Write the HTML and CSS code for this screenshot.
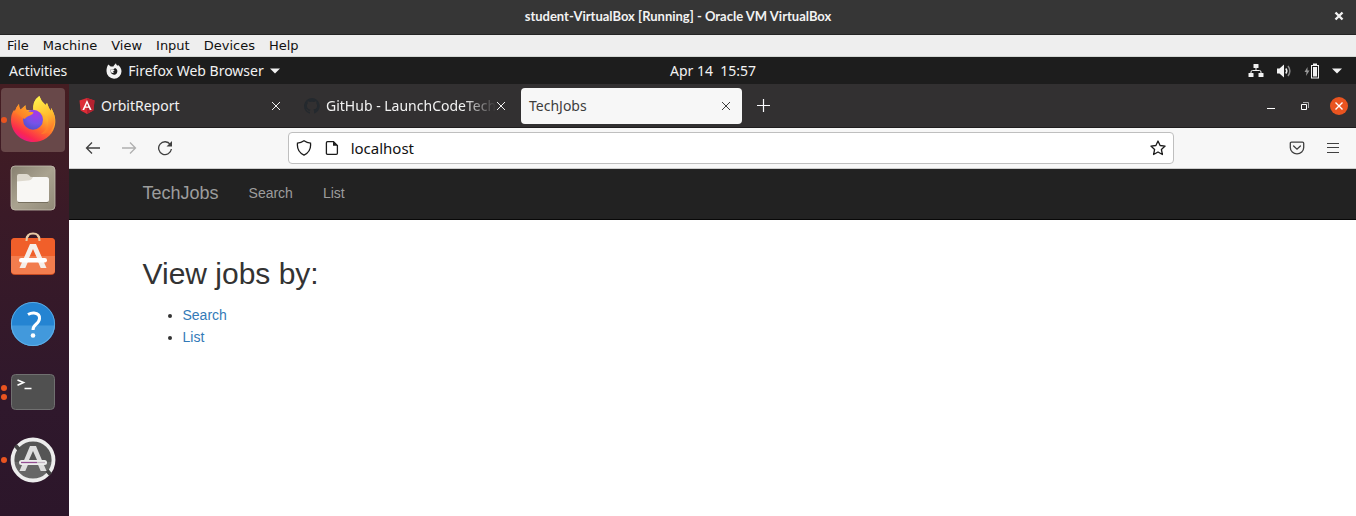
FILE: index.html
```html
<!DOCTYPE html>
<html lang="en">
<head>
<meta charset="utf-8">
<meta name="viewport" content="width=device-width, initial-scale=1">
<title>TechJobs</title>
<link rel="stylesheet" href="styles.css">
</head>
<body>
<header class="titlebar">
  <span class="titlebar-text">student-VirtualBox [Running] - Oracle VM VirtualBox</span>
  <button class="titlebar-close" aria-label="Close machine window">
    <svg width="10" height="10" viewBox="0 0 10 10"><path d="M1.500 1.500l7 7M8.500 1.500l-7 7" stroke="#f2f2f2" stroke-width="2.400"/></svg>
  </button>
</header>

<nav class="menubar" aria-label="Machine menu">
  <button>File</button><button>Machine</button><button>View</button><button>Input</button><button>Devices</button><button>Help</button>
</nav>

<div class="topbar">
  <div class="topbar-left">
    <button class="activities">Activities</button>
    <button class="app-menu">
      <svg width="16" height="16" viewBox="0 0 16 16"><path fill="#f2f2f2" d="M2.300 1.600 4.700 3.500 7.400 3.600C8 2 9 1 10 .2c.1 1.300.7 2 1.500 2.600l.6-.9c1.900 1.600 3.400 3.800 3.400 6.300A7.500 7.500 0 0 1 .5 8.300C.4 6 1 3.600 2.300 1.600z"/><path fill="#1d1d1d" d="M4.300 6.500 7.300 6.700 8.600 5.300C9.600 4.800 10.200 5.600 10.700 6.300c.9 1.200.9 2.900 0 4.100-1.300 1.700-3.900 1.700-5.300.2C4.800 10 4.600 9.400 4.700 8.600z"/><path fill="#f2f2f2" d="M4.300 6.300 7.600 6.900 8.600 7.400Q8 8.400 6.800 8.600 7.200 9.600 8.400 9.500 6.600 10.500 5 9.300z"/></svg>
      <span>Firefox Web Browser</span>
      <svg width="10" height="6" viewBox="0 0 10 6"><path d="M0 .5h10L5 5.500z" fill="#f2f2f2"/></svg>
    </button>
  </div>
  <button class="clock">Apr 14&nbsp; 15:57</button>
  <button class="tray" aria-label="System menu">
    <svg width="16" height="16" viewBox="0 0 16 16"><g fill="#f2f2f2"><rect x="5.500" y="1" width="5" height="4" rx=".6"/><rect x=".5" y="10" width="5" height="4" rx=".6"/><rect x="10.500" y="10" width="5" height="4" rx=".6"/></g><path d="M8 5v3M3 10.500V9q0-1.500 1.500-1.500h7Q13 7.500 13 9v1.500" fill="none" stroke="#f2f2f2"/></svg>
    <svg width="16" height="16" viewBox="0 0 16 16"><path d="M1 5.500h2.500L8 1.500v13l-4.500-4H1z" fill="#f2f2f2"/><path d="M9.800 5.500q2 2.500 0 5" fill="none" stroke="#f2f2f2" stroke-width="1.500"/><path d="M12 3q3.700 5 0 10" fill="none" stroke="#8a8a8a" stroke-width="1.500"/></svg>
    <svg width="16" height="16" viewBox="0 0 16 16"><path d="M3.500 4 .5 9h2L2 13l3.500-5.500h-2z" fill="#999"/><path d="M9 .5h4V2h2v13.500H7V2h2z" fill="#f2f2f2"/><path d="M8 3h6v11.500H8z" fill="#1d1d1d"/><path d="M9 4h4v9.500H9z" fill="#f2f2f2"/></svg>
    <svg width="10" height="6" viewBox="0 0 10 6"><path d="M0 .5h10L5 5.500z" fill="#f2f2f2"/></svg>
  </button>
</div>

<div class="desktop">
  <nav class="dock" aria-label="Dock">
    <button class="dock-item is-active" aria-label="Firefox">
      <span class="dots"><i></i></span>
      <svg viewBox="0 0 64 64">
        <defs>
          <linearGradient id="ff-body" x1=".8" y1=".1" x2=".3" y2="1"><stop offset="0" stop-color="#ffe63c"/><stop offset=".35" stop-color="#ffb02c"/><stop offset=".6" stop-color="#ff6a2c"/><stop offset=".85" stop-color="#fb2850"/><stop offset="1" stop-color="#e8168a"/></linearGradient>
          <linearGradient id="ff-flame" x1=".3" y1="0" x2=".6" y2="1"><stop offset="0" stop-color="#fff34c"/><stop offset=".55" stop-color="#ffbd2f"/><stop offset="1" stop-color="#ff6f2b"/></linearGradient>
          <radialGradient id="ff-globe" cx=".65" cy=".2" r=".9"><stop offset="0" stop-color="#a838e8"/><stop offset=".55" stop-color="#7553e8"/><stop offset="1" stop-color="#4c4fc8"/></radialGradient>
          <linearGradient id="ff-head" x1="1" y1="0" x2="0" y2="1"><stop offset="0" stop-color="#ffb628"/><stop offset="1" stop-color="#ff6c27"/></linearGradient>
        </defs>
        <path fill="url(#ff-body)" d="M18 16Q17.500 19 19.500 22l5-5Q24 20 25 22L34 22Q30 14 38.300 8q1.500 5 6.200 9l1.500-2q1.500 5 4 8v-3c4 6 5.500 13 3.500 19C51 48 42 54 32.500 54 20 54 10 44 10 32q0-6 3-10l1 1q1-4 4-7z"/>
        <path fill="url(#ff-flame)" d="M32 23Q31 13 38.300 8q1.500 5 6.200 9l1.500-2q1.500 5 4 8v-3c4 6 5 13 2.500 18Q49 46 40 46q8-5 7-15-5-8-15-8z"/>
        <circle cx="32" cy="31.800" r="10" fill="url(#ff-globe)"/>
        <path fill="url(#ff-head)" d="M14 23.500Q15 19.500 18 16q0 3 1.500 5.500l5-4q-.2 3 1.500 5 2 1.500 6.500 1.700 0 1.800-3.500 3.300-4.500 1.500-5 3.500l-2.500-1z"/>
      </svg>
    </button>
    <button class="dock-item" aria-label="Files">
      <svg viewBox="0 0 64 64"><defs><linearGradient id="files" x2="1" y2="1"><stop offset="0" stop-color="#878070"/><stop offset=".5" stop-color="#aaa390"/><stop offset="1" stop-color="#918a78"/></linearGradient></defs><rect x="10" y="10" width="44" height="44" rx="4" fill="url(#files)" stroke="#c4beb0" stroke-width=".8"/><rect x="16" y="21" width="32" height="25" rx="2.500" fill="#f8f7f4"/><path d="M16 25.500V20q0-2 2-2h7.500q2 0 2.800 1.500 1 2 3.700 1.500-1.500 3.500-5 3.500z" fill="#ded9ce"/><path d="M17 46.500h30" stroke="#77705f"/></svg>
    </button>
    <button class="dock-item" aria-label="Ubuntu Software">
      <svg viewBox="0 0 64 64"><path d="M25.500 16q0-6.500 6.500-6.500t6.500 6.500" fill="none" stroke="#e9cba6" stroke-width="2"/><rect x="10" y="14" width="44" height="37" rx="4" fill="#c64a22"/><rect x="10" y="14" width="44" height="36" rx="4" fill="#f05f2a"/><path d="M10 32h44v14q0 4-4 4H14q-4 0-4-4z" fill="#f27d4e"/><path d="M25.500 17q0-4 2-5.500M38.500 17q0-4-2-5.500" fill="none" stroke="#e9cba6" stroke-width="2"/><path fill-rule="evenodd" fill="#f5eee9" d="M29 20h6l10.500 24h-5.800l-3-7h-9.400l-3 7h-5.800zM32 25l-4 9h8z"/><rect x="18" y="34" width="28" height="4.500" rx="2.200" fill="#fff"/></svg>
    </button>
    <button class="dock-item" aria-label="Help">
      <svg viewBox="0 0 64 64"><circle cx="32" cy="32" r="22" fill="#2484d2"/><path d="M10 33.500h44a22 20.500 0 0 1-44 0z" fill="#4299dc"/><circle cx="32" cy="32" r="21.600" fill="none" stroke="#69b5e8" stroke-width=".8"/><path d="M27 22.500q3-1.800 6-1.600 6 .6 5.500 5.800-.2 3-3.700 5.800-2.800 2.200-2.800 5.500" fill="none" stroke="#fff" stroke-width="3"/><circle cx="32" cy="43.500" r="2.300" fill="#fff"/></svg>
    </button>
    <button class="dock-item" aria-label="Terminal">
      <span class="dots"><i></i><i></i></span>
      <svg viewBox="0 0 64 64"><rect x="10.500" y="14.500" width="43" height="35" rx="4" fill="#505050" stroke="#707070"/><path d="M16.500 20l6 2.500-6 2.700M23.500 28.500h7" fill="none" stroke="#fff" stroke-width="1.600"/></svg>
    </button>
    <button class="dock-item" aria-label="Software Updater">
      <span class="dots"><i></i></span>
      <svg viewBox="0 0 64 64"><circle cx="32" cy="32" r="20.500" fill="#555"/><path d="M12 34h40a20 19 0 0 1-40 0z" fill="#666"/><circle cx="32" cy="32" r="20.500" fill="none" stroke="#ededed" stroke-width="3.800"/><path d="M14.500 17.500l3.500 4M49.500 46.500l-3.500-4" stroke="#454545" stroke-width="4"/><path fill-rule="evenodd" fill="#dedede" d="M29 18h6l10.500 25h-5.800l-3-7h-9.400l-3 7h-5.800zM32 23l-4 9h8z"/><rect x="18" y="32" width="28" height="5" rx="2.500" fill="#ededed"/><path d="M20 34.500h16" stroke="#924d91" stroke-width="1.300"/><path d="M36 34.500h8" stroke="#c4b8c4" stroke-width="1.300"/></svg>
    </button>
  </nav>

  <section class="browser">
    <div class="tabstrip">
      <div class="tab">
        <svg class="favicon" viewBox="0 0 16 16"><path fill="#dd2c37" d="M8 0l7.500 2.600-1.100 10L8 16l-6.400-3.400L.5 2.600z"/><path fill="#b52230" d="M8 0l7.500 2.600-1.100 10L8 16z"/><path fill="#fff" fill-rule="evenodd" d="M8 2l4.600 10h-1.800l-.9-2.200H6.100L5.200 12H3.400zM8 5.300L6.700 8.400h2.600z"/></svg>
        <span class="tab-label">OrbitReport</span>
        <button class="tab-close" aria-label="Close OrbitReport"><svg viewBox="0 0 10 10"><path d="M1 1l8 8M9 1l-8 8" stroke="currentColor"/></svg></button>
      </div>
      <div class="tab">
        <svg class="favicon" viewBox="0 0 16 16"><path fill="#24292e" d="M8 0a8 8 0 0 0-2.500 15.600c.4.100.5-.2.500-.4v-1.500c-2.200.5-2.700-.9-2.700-.9-.4-.9-.9-1.200-.9-1.200-.7-.5.100-.5.100-.5.800.1 1.200.8 1.200.8.700 1.300 1.900.9 2.300.7.100-.5.300-.9.500-1.100-1.800-.2-3.600-.9-3.600-4 0-.8.300-1.600.8-2.100 0-.2-.3-1 .1-2.100 0 0 .7-.2 2.200.8a7.700 7.700 0 0 1 4 0c1.500-1 2.200-.8 2.200-.8.400 1.100.1 1.900.1 2.100.5.500.8 1.300.8 2.100 0 3.100-1.900 3.700-3.700 3.900.3.300.6.800.6 1.500v2.200c0 .2.100.5.500.4A8 8 0 0 0 8 0z"/></svg>
        <span class="tab-label is-faded">GitHub - LaunchCodeTech</span>
        <button class="tab-close" aria-label="Close GitHub"><svg viewBox="0 0 10 10"><path d="M1 1l8 8M9 1l-8 8" stroke="currentColor"/></svg></button>
      </div>
      <div class="tab is-selected">
        <span class="tab-label">TechJobs</span>
        <button class="tab-close" aria-label="Close TechJobs"><svg viewBox="0 0 10 10"><path d="M1 1l8 8M9 1l-8 8" stroke="currentColor"/></svg></button>
      </div>
      <button class="new-tab" aria-label="New tab"><svg width="13" height="13" viewBox="0 0 13 13"><path d="M6.500 0v13M0 6.500h13" stroke="#fbfbfe" stroke-width="1.200"/></svg></button>
      <div class="window-controls">
        <button aria-label="Minimize"><svg width="8" height="8" viewBox="0 0 8 8"><path d="M0 6.500h8" stroke="#fff"/></svg></button>
        <button aria-label="Restore"><svg width="8" height="8" viewBox="0 0 8 8"><path d="M2 .5h5.500V6" fill="none" stroke="#aaa"/><path d="M.5 2.500h5v5h-5z" fill="none" stroke="#fff"/></svg></button>
        <button class="window-close" aria-label="Close"><svg width="8" height="8" viewBox="0 0 8 8"><path d="M.5.5l7 7M7.500.5l-7 7" stroke="#fff" stroke-width="1.400"/></svg></button>
      </div>
    </div>

    <div class="toolbar">
      <button class="tool" aria-label="Back"><svg viewBox="0 0 16 16"><path d="M7 2.500L1.500 8 7 13.500M1.500 8H15" fill="none" stroke="#404040" stroke-width="1.300"/></svg></button>
      <button class="tool" aria-label="Forward" disabled><svg viewBox="0 0 16 16"><path d="M9 2.500L14.500 8 9 13.500M14.500 8H1" fill="none" stroke="#b0b0b0" stroke-width="1.300"/></svg></button>
      <button class="tool" aria-label="Reload"><svg viewBox="0 0 16 16"><path d="M13.300 4.500A6.400 6.400 0 1 0 14.400 9" fill="none" stroke="#404040" stroke-width="1.300"/><path d="M15 1v5.500H9.500z" fill="#404040"/></svg></button>
      <div class="urlbar">
        <svg viewBox="0 0 16 16"><path d="M8 .8q3 2.200 6.500 2.300 1 8.500-6.500 12-7.500-3.500-6.500-12Q5 3 8 .8z" fill="none" stroke="#1b1b1b" stroke-width="1.300"/></svg>
        <svg viewBox="0 0 16 16"><path d="M3.500 1.600h6L13.400 5.500v7.800q0 1.100-1.100 1.100H3.500q-1.100 0-1.100-1.100V2.700q0-1.100 1.100-1.100z" fill="none" stroke="#1b1b1b" stroke-width="1.300"/><path d="M9 1.500v4.300h4.500z" fill="#1b1b1b"/></svg>
        <input type="text" value="localhost" aria-label="Address">
        <button class="bookmark" aria-label="Bookmark this page"><svg viewBox="0 0 16 16"><path d="M8 1l2.100 4.500 5 .6-3.700 3.400 1 5L8 12l-4.400 2.500 1-5L.9 6.100l5-.6z" fill="none" stroke="#1b1b1b" stroke-width="1.300" stroke-linejoin="round"/></svg></button>
      </div>
      <button class="tool" aria-label="Save to Pocket"><svg viewBox="0 0 16 16"><path d="M2.500 2.100h11q1.200 0 1.200 1.200V7.500a6.700 6.400 0 0 1-13.400 0V3.300q0-1.200 1.200-1.200z" fill="none" stroke="#404040" stroke-width="1.300"/><path d="M4.600 6L8 9.200 11.400 6" fill="none" stroke="#404040" stroke-width="1.300" stroke-linecap="round"/></svg></button>
      <button class="tool" aria-label="Open application menu"><svg viewBox="0 0 16 16"><path d="M2 3.500h12M2 7.500h12M2 12.500h12" stroke="#404040" stroke-width="1.200"/></svg></button>
    </div>

    <div class="page">
      <nav class="navbar">
        <div class="container navbar-inner">
          <a class="brand" href="#">TechJobs</a>
          <a href="#search">Search</a>
          <a href="#list">List</a>
        </div>
      </nav>
      <main class="container">
        <h2>View jobs by:</h2>
        <ul>
          <li><a href="#search">Search</a></li>
          <li><a href="#list">List</a></li>
        </ul>
      </main>
    </div>
  </section>
</div>
</body>
</html>
```
FILE: styles.css
```css
* { box-sizing: border-box; }
html, body { height: 100%; }
body {
  margin: 0;
  display: flex;
  flex-direction: column;
  min-height: 100vh;
  overflow: hidden;
  font-family: "Noto Sans", "Open Sans", sans-serif;
  font-size: 14px;
  background: #fff;
}
button {
  display: flex;
  align-items: center;
  justify-content: center;
  padding: 0;
  border: 0;
  background: none;
  color: inherit;
  font: inherit;
}
svg { display: block; flex: none; }

/* Host window */
.titlebar {
  display: grid;
  grid-template-columns: 1fr auto 1fr;
  align-items: center;
  flex: none;
  height: 35px;
  padding: 0 12px 2px;
  background: #363636;
  border-bottom: 1px solid #242424;
  color: #f2f2f2;
}
.titlebar-text {
  grid-column: 2;
  font: 700 13px/20px Lato, sans-serif;
}
.titlebar-close { justify-self: end; }
.menubar {
  display: flex;
  align-items: center;
  gap: 14px;
  flex: none;
  height: 22px;
  padding: 0 7px;
  background: #eee;
  border-bottom: 1px solid #d4d8d4;
  color: #111;
  font: 13px/20px "DejaVu Sans", sans-serif;
}

/* Guest top bar */
.topbar {
  display: grid;
  grid-template-columns: 1fr auto 1fr;
  align-items: center;
  flex: none;
  height: 27px;
  padding: 0 14px 0 9px;
  background: #1d1d1d;
  color: #f2f2f2;
  line-height: 20px;
}
.topbar-left { display: flex; gap: 39px; }
.app-menu { gap: 6px; }
.clock { padding-left: 75px; }
.tray { justify-self: end; gap: 12px; }

.desktop { display: flex; flex: 1; min-height: 0; }
.dock {
  display: flex;
  flex-direction: column;
  gap: 4px;
  flex: none;
  width: 69px;
  padding: 4px 4px 0 1px;
  background: linear-gradient(#451d22, #3a1a27 30%, #2f182c 75%, #2c162a);
}
.dock-item {
  position: relative;
  flex: none;
  width: 64px;
  height: 64px;
  border-radius: 4px;
}
.dock-item.is-active { background: #684849; }
.dock-item svg { width: 64px; height: 64px; }
.dots {
  position: absolute;
  left: 0;
  top: 0;
  bottom: 0;
  display: flex;
  flex-direction: column;
  justify-content: center;
  gap: 3px;
}
.dots i { width: 6px; height: 6px; border-radius: 50%; background: #e95420; }

/* Browser chrome */
.browser { display: flex; flex-direction: column; flex: 1; min-width: 0; }
.tabstrip {
  display: flex;
  align-items: center;
  gap: 4px;
  flex: none;
  height: 44px;
  padding: 0 8px 0 2px;
  background: #323031;
  border-bottom: 1px solid #1f1d1e;
}
.tab {
  display: flex;
  align-items: center;
  gap: 6px;
  width: 221px;
  height: 36px;
  padding: 0 11px 0 8px;
  border-radius: 4px;
  color: #f2f2f2;
  line-height: 20px;
}
.tab.is-selected { background: #f7f7f7; color: #3d3d3d; }
.favicon { width: 16px; height: 16px; }
.tab-label { flex: 1; white-space: nowrap; }
.tab-label.is-faded {
  margin-right: -6px;
  -webkit-mask-image: linear-gradient(to left, transparent, #000 32px);
  mask-image: linear-gradient(to left, transparent, #000 32px);
}
.tab-close svg { width: 10px; height: 10px; }
.new-tab { width: 34px; height: 34px; }
.window-controls { display: flex; align-items: center; gap: 16px; margin-left: auto; }
.window-controls button { width: 18px; height: 18px; }
.window-controls .window-close { border-radius: 50%; background: #e95420; }

.toolbar {
  display: flex;
  align-items: center;
  flex: none;
  height: 41px;
  padding: 0 5px 0 6px;
  background: #f7f7f7;
  border-bottom: 1px solid #ccc;
}
.tool { flex: none; width: 36px; height: 32px; }
.tool svg, .urlbar svg { width: 16px; height: 16px; }
.urlbar {
  display: flex;
  align-items: center;
  gap: 12px;
  flex: 1;
  height: 32px;
  margin: 0 8.200%;
  padding: 0 7px;
  background: #fff;
  border: 1px solid #bfbfbf;
  border-radius: 4px;
}
.urlbar input {
  flex: 1;
  min-width: 0;
  margin-left: -1px;
  padding: 0;
  border: 0;
  outline: 0;
  background: none;
  color: #111;
  font: inherit;
  font-size: 15px;
}

/* Page */
.page {
  flex: 1;
  background: #fff;
  color: #333;
  font: 14px/22px "Liberation Sans", Arial, sans-serif;
}
.container { max-width: 1170px; margin: 0 auto; padding: 0 15px; }
.navbar { background: #222; border-bottom: 1px solid #080808; }
.navbar-inner { display: flex; align-items: center; gap: 30px; height: 50px; padding-bottom: 2px; }
.navbar a { color: #9d9d9d; text-decoration: none; }
.navbar .brand { font-size: 18px; }
.page h2 { margin: 37px 0 14px; font-size: 30px; font-weight: 400; line-height: 33px; }
.page ul { margin: 0; padding-left: 40px; }
.page li a { color: #337ab7; text-decoration: none; }
```
